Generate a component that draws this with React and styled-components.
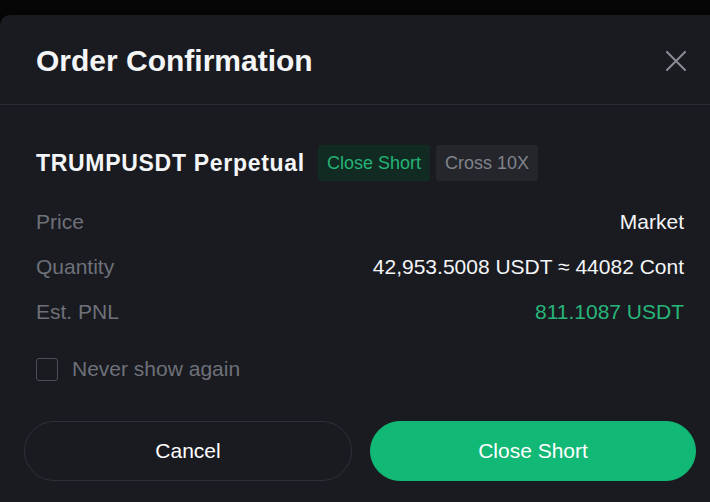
import React from 'react';
import styled, { createGlobalStyle } from 'styled-components';

const Global = createGlobalStyle`
  html, body {
    margin: 0;
    padding: 0;
    background: #050506;
    font-family: "Liberation Sans", Arial, sans-serif;
    -webkit-font-smoothing: antialiased;
  }
`;

const Modal = styled.div`
  margin-top: 15px;
  background: #1a1b20;
  border-top-left-radius: 10px;
  height: 487px;
  display: flex;
  flex-direction: column;
  overflow: hidden;
`;

const Header = styled.div`
  height: 90px;
  display: flex;
  align-items: center;
  justify-content: space-between;
  padding: 3px 24px 0 36px;
  border-bottom: 1px solid #2a2c33;
  box-sizing: border-box;
`;

const Title = styled.h1`
  margin: 0;
  font-size: 30px;
  font-weight: 700;
  color: #f4f5f7;
`;

const CloseBtn = styled.button`
  width: 20px;
  height: 20px;
  padding: 0;
  border: none;
  background: none;
  display: flex;
  align-items: center;
  justify-content: center;
  cursor: pointer;
`;

const Body = styled.div`
  padding: 40px 26px 0 36px;
  display: flex;
  flex-direction: column;
`;

const SymbolRow = styled.div`
  display: flex;
  align-items: center;
  height: 36px;
`;

const Symbol = styled.span`
  font-size: 23px;
  font-weight: 700;
  letter-spacing: 0.7px;
  color: #f4f5f7;
  margin-right: 13px;
`;

const Tag = styled.span`
  height: 36px;
  display: flex;
  align-items: center;
  padding: 0 9px;
  margin-right: 6px;
  border-radius: 3px;
  font-size: 18px;
  background: ${(p) => (p.$green ? '#112a22' : '#24262c')};
  color: ${(p) => (p.$green ? '#24b474' : '#80838b')};
`;

const Rows = styled.div`
  margin-top: 18px;
  display: flex;
  flex-direction: column;
`;

const Row = styled.div`
  height: 45px;
  display: flex;
  align-items: center;
  justify-content: space-between;
  font-size: 21px;
`;

const Label = styled.span`
  color: #6e717a;
`;

const Value = styled.span`
  color: ${(p) => (p.$green ? '#27b67a' : '#f4f5f7')};
`;

const CheckRow = styled.label`
  margin-top: 23px;
  display: flex;
  align-items: center;
  gap: 14px;
  font-size: 21px;
  color: #6e717a;
`;

const Box = styled.span`
  width: 20px;
  height: 21px;
  border: 1.5px solid #4b4e56;
  border-radius: 3px;
`;

const Actions = styled.div`
  margin-top: 40px;
  padding: 0 14px 0 24px;
  display: grid;
  grid-template-columns: 328px 326px;
  gap: 18px;
`;

const Button = styled.button`
  height: 60px;
  border-radius: 30px;
  font-family: inherit;
  font-size: 21px;
  color: #ffffff;
  cursor: pointer;
  border: 1px solid ${(p) => (p.$primary ? '#12b875' : '#2e3038')};
  background: ${(p) => (p.$primary ? '#12b875' : 'transparent')};
`;

export default function App() {
  return (
    <>
      <Global />
      <Modal>
        <Header>
          <Title>Order Confirmation</Title>
          <CloseBtn aria-label="close">
            <svg width="20" height="20" viewBox="0 0 20 20">
              <path d="M1 1L19 19M19 1L1 19" stroke="#898c93" strokeWidth="2" strokeLinecap="round" />
            </svg>
          </CloseBtn>
        </Header>
        <Body>
          <SymbolRow>
            <Symbol>TRUMPUSDT Perpetual</Symbol>
            <Tag $green>Close Short</Tag>
            <Tag>Cross 10X</Tag>
          </SymbolRow>
          <Rows>
            <Row>
              <Label>Price</Label>
              <Value>Market</Value>
            </Row>
            <Row>
              <Label>Quantity</Label>
              <Value>42,953.5008 USDT ≈ 44082 Cont</Value>
            </Row>
            <Row>
              <Label>Est. PNL</Label>
              <Value $green>811.1087 USDT</Value>
            </Row>
          </Rows>
          <CheckRow>
            <Box />
            Never show again
          </CheckRow>
        </Body>
        <Actions>
          <Button>Cancel</Button>
          <Button $primary>Close Short</Button>
        </Actions>
      </Modal>
    </>
  );
}
